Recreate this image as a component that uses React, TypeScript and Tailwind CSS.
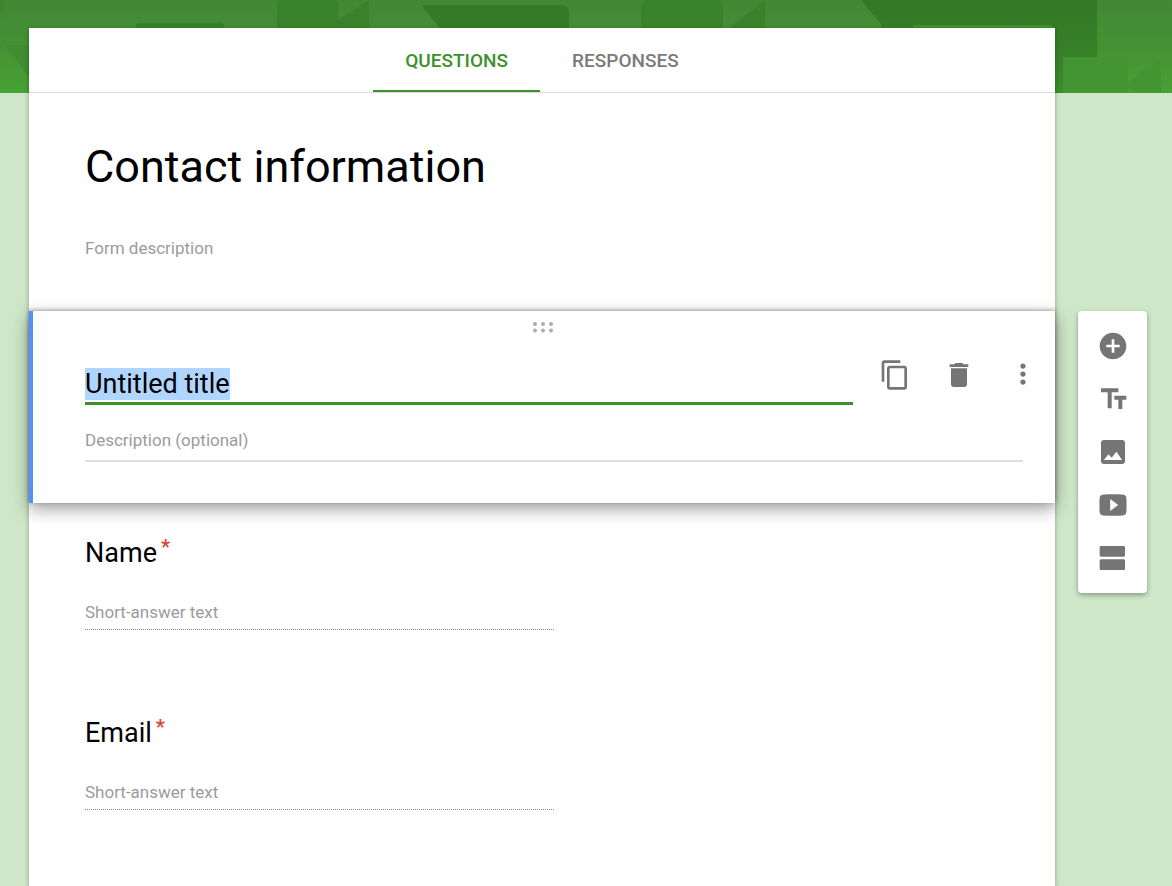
import { useEffect, useRef, useState } from "react";

const tools = [
  {
    label: "Add question",
    path: "M12 2C6.48 2 2 6.48 2 12s4.48 10 10 10 10-4.48 10-10S17.52 2 12 2zm5 11h-4v4h-2v-4H7v-2h4V7h2v4h4v2z",
  },
  {
    label: "Add title and description",
    path: "M3 4v3h5v12h3V7h5V4H3zm19 5.500h-9v3h3v7h3v-7h3v-3z",
  },
  {
    label: "Add image",
    path: "M21 19V5c0-1.1-.9-2-2-2H5c-1.1 0-2 .9-2 2v14c0 1.1.9 2 2 2h14c1.1 0 2-.9 2-2zM5.2 18l3.4-4.4 2.4 2.7 3.6-4.4L18.8 18H5.2z",
  },
  {
    label: "Add video",
    path: "M12 3.9c-2.8 0-5 .1-7.4.3C2.6 4.4 2 5.6 1.9 7.500c-.1 3-.1 6 0 9 .1 1.900.7 3.100 2.700 3.300 4.900.4 9.900.4 14.800 0 2-.2 2.600-1.400 2.700-3.300.1-3 .1-6 0-9-.1-1.900-.7-3.100-2.700-3.300-2.400-.2-4.600-.3-7.400-.3zM9.900 7.500l6 4.500-6 4.500v-9z",
  },
  {
    label: "Add section",
    path: "M20 13H3c-.55 0-1 .45-1 1v6c0 .55.45 1 1 1h17c.55 0 1-.45 1-1v-6c0-.55-.45-1-1-1zm0-10H3c-.55 0-1 .45-1 1v6c0 .55.45 1 1 1h17c.55 0 1-.45 1-1V4c0-.55-.45-1-1-1z",
  },
];

const actions = [
  {
    label: "Duplicate",
    path: "M16 1H4c-1.1 0-2 .9-2 2v14h2V3h12V1zm3 4H8c-1.1 0-2 .9-2 2v14c0 1.1.9 2 2 2h11c1.1 0 2-.9 2-2V7c0-1.1-.9-2-2-2zm0 16H8V7h11v14z",
  },
  {
    label: "Delete",
    path: "M6 19c0 1.1.9 2 2 2h8c1.1 0 2-.9 2-2V7H6v12zM19 4h-3.5l-1-1h-5l-1 1H5v2h14V4z",
  },
  {
    label: "More options",
    path: "M12 7.300c1.1 0 2-.9 2-2s-.9-2-2-2-2 .9-2 2 .9 2 2 2zm0 2c-1.1 0-2 .9-2 2s.9 2 2 2 2-.9 2-2-.9-2-2-2zm0 6c-1.1 0-2 .9-2 2s.9 2 2 2 2-.9 2-2-.9-2-2-2z",
  },
];

const questions = ["Name", "Email"];

function Icon({ path }: { path: string }) {
  return (
    <svg viewBox="0 0 24 24" className="size-8 fill-current" aria-hidden="true">
      <path d={path} />
    </svg>
  );
}

function Banner() {
  return (
    <div className="absolute inset-x-0 top-0 h-[93px] overflow-hidden bg-linear-to-b from-[#438735] via-[#449233] to-[#48a136]">
      <svg viewBox="0 0 1172 93" preserveAspectRatio="xMidYMin slice" className="h-full w-full" aria-hidden="true">
        <defs>
          <linearGradient id="shade" x1="0" y1="0" x2="0" y2="93" gradientUnits="userSpaceOnUse">
            <stop offset="0" stopColor="#347826" />
            <stop offset="0.5" stopColor="#367f28" />
            <stop offset="1" stopColor="#3c8e2c" />
          </linearGradient>
        </defs>
        <g fill="#3a8229">
          <path d="M0 0h4v18l-4-6z" opacity="0.5" />
          <path d="M5 45h30v40z" fill="#3f8c31" />
          <path d="M135 30q0-7 5-7h80q5 0 5 7z" fill="#357f29" />
          <path d="M277 28V4q0-4 4-4h53q4 0 4 4v16l31-20v28z" />
          <path d="M421 5h141q7 0 7 7v18H441z" fill="#347b27" />
          <path d="M641 28V7q0-7 7-7h68q7 0 7 7v21z" />
          <path d="M729 28l36-28v28z" />
        </g>
        <path d="M861 0h236v57h-34v36H930L881 28V24z" fill="url(#shade)" />
        <path d="M913 28v-3h138l3 3z" fill="#43902f" />
        <path d="M1063 93V61q0-4 4-4h57q4 0 4 4v21l33-24v35h-24l-9-5v5z" fill="#439432" />
      </svg>
    </div>
  );
}

export default function App() {
  const [title, setTitle] = useState("Untitled title");
  const titleRef = useRef<HTMLInputElement>(null);

  useEffect(() => {
    titleRef.current?.focus();
    titleRef.current?.select();
  }, []);

  return (
    <div className="relative min-h-screen bg-[#cee7c8] font-['Roboto',sans-serif] text-black">
      <Banner />
      <div className="relative flex min-h-screen items-start gap-[23px] pt-7 pr-[25px] pl-[29px]">
        <main className="min-w-0 flex-1 self-stretch bg-white shadow-[0_2px_5px_rgba(0,0,0,0.3)]">
          <nav className="flex h-[65px] justify-center border-b border-[#dcdcdc] text-[19px] font-medium">
            <button className="border-b-2 border-[#3c912c] px-8 pt-1 text-[#3c912c]">QUESTIONS</button>
            <button className="border-b-2 border-transparent px-8 pt-1 text-[#7b7b7b]">RESPONSES</button>
          </nav>

          <header className="flex flex-col pt-[47px] pr-8 pb-[50px] pl-14">
            <input
              aria-label="Form title"
              defaultValue="Contact information"
              className="h-[54px] w-full text-[45px] outline-none"
            />
            <input
              aria-label="Form description"
              placeholder="Form description"
              className="mt-[43px] h-6 w-full text-[17px] outline-none placeholder:text-[#9b9b9b]"
            />
          </header>

          <section className="relative border-l-4 border-[#5090ff] bg-white pt-2.5 pb-[41px] shadow-[0_-1px_4px_rgba(0,0,0,0.3),0_6px_16px_rgba(0,0,0,0.38)]">
            <svg viewBox="0 0 22 12" className="mx-auto h-3 w-[22px] fill-[#acacac]" aria-hidden="true">
              <circle cx="2" cy="3" r="2" />
              <circle cx="10" cy="3" r="2" />
              <circle cx="18" cy="3" r="2" />
              <circle cx="2" cy="9.500" r="2" />
              <circle cx="10" cy="9.500" r="2" />
              <circle cx="18" cy="9.500" r="2" />
            </svg>
            <div className="mt-[26px] flex items-start pr-4 pl-[52px]">
              <input
                ref={titleRef}
                aria-label="Section title"
                value={title}
                onChange={(e) => setTitle(e.target.value)}
                className="mr-[26px] h-[46px] min-w-0 flex-1 border-b-3 border-[#3c912c] pt-2 pb-0.5 text-[27px] outline-none selection:bg-[#b0d6ff] selection:text-black"
              />
              <div className="flex gap-8 text-[#757575]">
                {actions.map((a) => (
                  <button key={a.label} aria-label={a.label}>
                    <Icon path={a.path} />
                  </button>
                ))}
              </div>
            </div>
            <div className="mt-5 pr-8 pl-[52px]">
              <input
                aria-label="Section description"
                placeholder="Description (optional)"
                className="block h-[37px] w-full border-b-2 border-[#e0e0e0] pb-1.5 text-[17px] outline-none placeholder:text-[#9b9b9b]"
              />
            </div>
          </section>

          <div className="flex flex-col gap-[87px] pt-[34px] pr-8 pb-[76px] pl-14">
            {questions.map((q) => (
              <div key={q}>
                <label htmlFor={q} className="flex h-8 items-center gap-1 text-[27px]">
                  {q}
                  <span className="self-start text-xl leading-5 font-bold text-[#db4437]">*</span>
                </label>
                <input
                  id={q}
                  placeholder="Short-answer text"
                  className="mt-[30px] block h-[31px] w-1/2 border-b border-dotted border-[#8a8a8a] pb-1 text-[17px] outline-none placeholder:text-[#9b9b9b]"
                />
              </div>
            ))}
          </div>
        </main>

        <aside className="mt-[283px] flex w-[69px] flex-col items-center gap-[21px] rounded-sm bg-white py-[19px] text-[#757575] shadow-[0_2px_5px_rgba(0,0,0,0.35)]">
          {tools.map((t) => (
            <button key={t.label} aria-label={t.label}>
              <Icon path={t.path} />
            </button>
          ))}
        </aside>
      </div>
    </div>
  );
}
